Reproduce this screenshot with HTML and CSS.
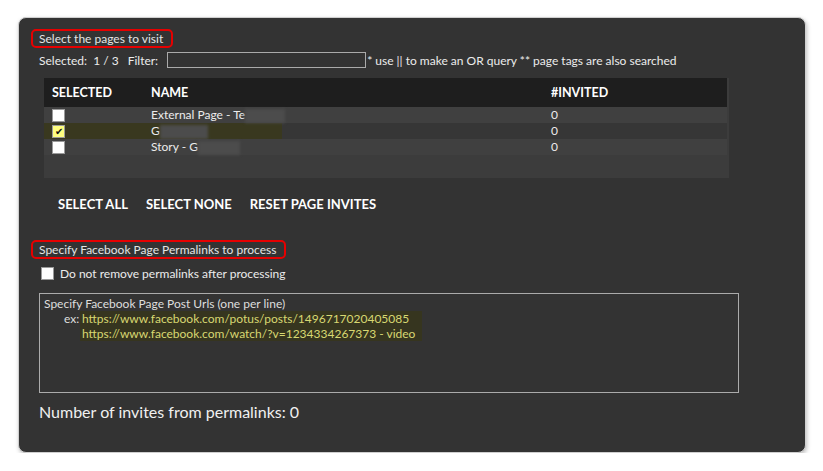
FILE: index.html
```html
<!DOCTYPE html>
<html lang="en">
<head>
  <meta charset="UTF-8">
  <title>Page invites</title>
  <link rel="stylesheet" href="styles.css">
</head>
<body>
  <div class="window">
    <div class="section-title">Select the pages to visit</div>
    <div class="filter-row">
      <span>Selected:&nbsp; 1 / 3</span>
      <span class="filter-label">Filter:</span>
      <input class="filter-input" type="text">
      <span>* use || to make an OR query ** page tags are also searched</span>
    </div>

    <div class="pages">
      <table class="pages-table">
        <thead>
          <tr><th class="col-sel">SELECTED</th><th class="col-name">NAME</th><th>#INVITED</th></tr>
        </thead>
        <tbody>
          <tr>
            <td class="col-sel"><span class="box"></span></td>
            <td class="col-name">External Page - Te<span class="redact r1"></span></td>
            <td>0</td>
          </tr>
          <tr class="picked">
            <td class="col-sel"><span class="box checked">&#10004;</span></td>
            <td class="col-name">G<span class="redact r2"></span></td>
            <td>0</td>
          </tr>
          <tr>
            <td class="col-sel"><span class="box"></span></td>
            <td class="col-name">Story - G<span class="redact r3"></span></td>
            <td>0</td>
          </tr>
        </tbody>
      </table>
    </div>

    <div class="actions">
      <button class="link-btn">SELECT ALL</button>
      <button class="link-btn">SELECT NONE</button>
      <button class="link-btn">RESET PAGE INVITES</button>
    </div>

    <div class="section-title second">Specify Facebook Page Permalinks to process</div>
    <label class="keep-row"><span class="box"></span>Do not remove permalinks after processing</label>

    <div class="urls">
      <div>Specify Facebook Page Post Urls (one per line)</div>
      <div class="example"><span class="ex">ex:</span><span class="samples">https://www.facebook.com/potus/posts/1496717020405085<br>https://www.facebook.com/watch/?v=1234334267373 - video</span></div>
    </div>

    <div class="count">Number of invites from permalinks: 0</div>
  </div>
</body>
</html>
```

FILE: styles.css
```css
body {
  margin: 0;
  background: #fff;
  font-family: Lato, "Liberation Sans", sans-serif;
  font-size: 12px;
  color: #ececec;
}
.window {
  margin: 17px 0 0 18px;
  width: 766px;
  height: 423px;
  padding: 11px 0 0 20px;
  background: #333;
  border: 1px solid #cfcfcf;
  border-radius: 8px;
  box-shadow: 1px 2px 4px rgba(0, 0, 0, 0.25);
}
.section-title {
  display: inline-block;
  padding: 0 8px 0 6px;
  margin-left: -8px;
  height: 15px;
  line-height: 15px;
  border: 2px solid #e60000;
  border-radius: 5px;
  color: #e4e4e4;
}
.filter-row {
  display: flex;
  align-items: center;
  height: 16px;
  margin-top: 4px;
}
.filter-label {
  margin-left: 9px;
  margin-right: 9px;
}
.filter-input {
  width: 197px;
  height: 14px;
  padding: 0;
  margin: 0 1px 0 0;
  border: 1px solid #aaa;
  background: #333;
}

.pages {
  margin: 10px 0 0 5px;
  width: 685px;
  height: 100px;
  background: #3c3c3c;
}
.pages-table {
  width: 683px;
  border-collapse: collapse;
}
.pages-table th {
  height: 29px;
  padding: 0;
  background: #1e1e1e;
  color: #fff;
  font-weight: 700;
  text-align: left;
  font-size: 12.5px;
}
.pages-table td {
  height: 16px;
  padding: 0;
  line-height: 16px;
  background: #404040;
}
.pages-table tbody tr:nth-child(2) td {
  background: #363636;
}
.pages-table .picked td.col-name {
  background: linear-gradient(to right, #39381f 0 131px, #363636 131px);
}
.pages-table .picked td.col-sel {
  background: #39381f;
}
.col-sel {
  width: 99px;
  padding-left: 8px !important;
}
.col-name {
  width: 400px;
}
.box {
  display: inline-block;
  width: 11px;
  height: 11px;
  background: #fff;
  border: 1px solid #9a9a9a;
  vertical-align: middle;
  color: #111;
  font-size: 10px;
  line-height: 11px;
  text-align: center;
}
.box.checked {
  background: #ffff80;
}
.redact {
  display: inline-block;
  height: 14px;
  vertical-align: middle;
  background: #4c4c4c;
  filter: blur(1.5px);
}
.r1 { width: 40px; }
.r2 { width: 48px; }
.r3 { width: 42px; }

.actions {
  display: flex;
  margin: 17px 0 0 10px;
}
.link-btn {
  background: none;
  border: none;
  padding: 0 9px;
  color: #fff;
  font-family: Lato, "Liberation Sans", sans-serif;
  font-size: 13px;
  font-weight: 700;
  height: 18px;
  cursor: pointer;
}

.section-title.second {
  margin-top: 27px;
}
.keep-row {
  display: flex;
  align-items: center;
  gap: 6px;
  margin: 6px 0 0 2px;
  height: 16px;
}

.urls {
  margin-top: 12px;
  width: 694px;
  height: 96px;
  padding: 2px 0 0 4px;
  border: 1px solid #ababab;
  line-height: 15px;
  color: #dedede;
}
.example {
  display: flex;
  align-items: flex-start;
}
.ex {
  margin-left: 20px;
  width: 16px;
}
.samples {
  padding: 0 7px 0 2px;
  background: #36351f;
  color: #d8d872;
}
.count {
  margin-top: 9px;
  font-size: 16px;
  color: #f0f0f0;
}
```
